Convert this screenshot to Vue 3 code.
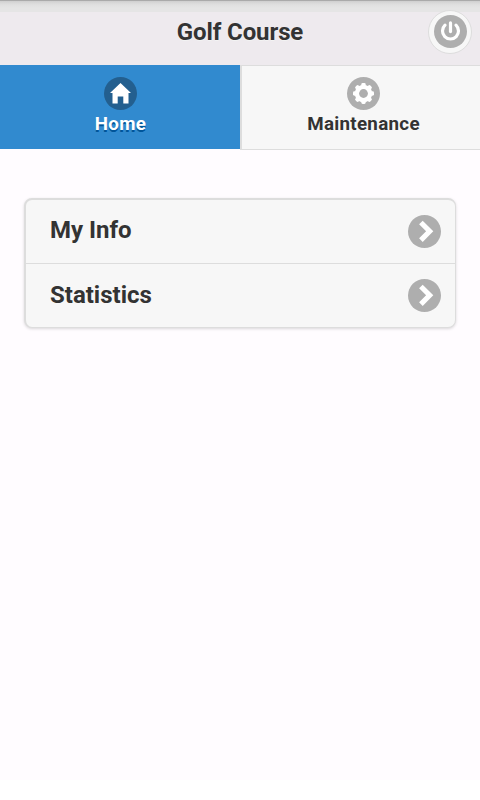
<script setup>
    import { ref } from 'vue';

    const activeTab = ref('home');

    const tabs = [
        { id: 'home', label: 'Home' },
        { id: 'maintenance', label: 'Maintenance' },
    ];

    const items = ['My Info', 'Statistics'];

    const teeth = [0, 45, 90, 135, 180, 225, 270, 315];
</script>

<template>
    <div class='page'>
        <header class='header'>
            <h1 class='title'>Golf Course</h1>
            <button class='power' aria-label='Log out'>
                <svg class='disc' viewBox='0 0 33 33'>
                    <circle cx='16.5' cy='16.5' r='16.5' />
                    <path class='line' d='M11 10.2 A8 8 0 1 0 22 10.2' />
                    <path class='line' d='M16.5 7.9 V16.6' />
                </svg>
            </button>
        </header>

        <nav class='tabs'>
            <button
                v-for='tab in tabs'
                :key='tab.id'
                class='tab'
                :class='{ active: activeTab == tab.id }'
                @click='activeTab = tab.id'
            >
                <svg class='disc' viewBox='0 0 33 33'>
                    <circle cx='16.5' cy='16.5' r='16.5' />
                    <polygon v-if='tab.id == "home"' class='glyph' points='16.5,6 6,16 8.5,16 8.5,26.6 13.7,26.6 13.7,19.5 19.3,19.5 19.3,26.6 24.5,26.6 24.5,16 27,16' />
                    <g v-else class='glyph'>
                        <circle cx='16.5' cy='16.5' r='8.7' />
                        <rect v-for='angle in teeth' :key='angle' x='14.3' y='6' width='4.4' height='5' rx='1.4' :transform='`rotate(${angle} 16.5 16.5)`' />
                        <circle class='hole' cx='16.5' cy='16.5' r='4.4' />
                    </g>
                </svg>
                <span class='label'>{{ tab.label }}</span>
            </button>
        </nav>

        <main class='content'>
            <ul class='list'>
                <li v-for='item in items' :key='item' class='item'>
                    <span class='text'>{{ item }}</span>
                    <svg class='disc' viewBox='0 0 33 33'>
                        <circle cx='16.5' cy='16.5' r='16.5' />
                        <polygon class='glyph' points='11.1,9.3 14.7,5.7 25.3,16.3 14.7,26.9 11.1,23.3 18.1,16.3' />
                    </svg>
                </li>
            </ul>
        </main>
    </div>
</template>

<style>
    body {
        background: #fff;
    }
</style>

<style scoped>
    .page {
        height: 780px;
        background: #fffcff;
        color: #333;
        font-family: Roboto, sans-serif;
        font-weight: bold;
    }

    .header {
        position: relative;
        box-sizing: border-box;
        height: 66px;
        border-bottom: 1px solid #ddd;
        background: linear-gradient(#aaa 0, #aaa 1px, #cfcfcf 1px, #d9d9d9 3px, #e0e0e0 5px, #e5e5e5 8px, #e5e5e5 12px, #eeeaee 12px);
    }

    .title {
        margin: 0;
        padding-top: 17px;
        font-size: 24px;
        line-height: 30px;
        letter-spacing: -.1px;
        text-align: center;
        text-shadow: 0 1px 0 #f3f3f3;
    }

    .power {
        position: absolute;
        top: 9.5px;
        right: 8px;
        display: flex;
        align-items: center;
        justify-content: center;
        width: 44px;
        height: 44px;
        padding: 0;
        border: 1px solid #ddd;
        border-radius: 50%;
        background: #f7f7f7;
    }

    .disc {
        display: block;
        flex: none;
        width: 33px;
        height: 33px;
        fill: #aeaeae;
    }

    .line {
        fill: none;
        stroke: #fff;
        stroke-width: 3.2;
        stroke-linecap: round;
    }

    .glyph {
        fill: #fff;
    }

    .hole {
        fill: #aeaeae;
    }

    .tabs {
        display: flex;
        height: 84px;
        margin-top: -1px;
        position: relative;
    }

    .tab {
        box-sizing: border-box;
        display: flex;
        flex-direction: column;
        align-items: center;
        width: 240px;
        height: 85px;
        padding: 11px 0 0 4px;
        border: 0 solid #ddd;
        border-width: 1px 0 1px 2px;
        background: #f7f7f7;
        color: #333;
        font: inherit;
        font-size: 18.75px;
        letter-spacing: .3px;
    }

    .tab.active {
        height: 84px;
        padding: 12px 0 0;
        border: none;
        background: #318acf;
        color: #fff;
        text-shadow: 0 2px 0 #005599;
    }

    .tab.active .disc {
        fill: #235f8f;
    }

    .tab.active .glyph {
        fill: #fff;
    }

    .label {
        margin-top: 2px;
        padding-left: 1px;
        line-height: 25px;
    }

    .content {
        padding: 49px 24px 0;
    }

    .list {
        margin: 0;
        padding: 0;
        border: 1px solid #ddd;
        border-width: 2px 1px 1px 2px;
        border-radius: 8px;
        background: #f7f7f7;
        box-shadow: 0 1px 3px rgba(0, 0, 0, .15);
        list-style: none;
    }

    .item {
        display: flex;
        align-items: center;
        justify-content: space-between;
        height: 63px;
        padding: 0 14px 0 24px;
        font-size: 24px;
        line-height: 30px;
    }

    .item + .item {
        border-top: 1px solid #ddd;
    }

    .text {
        padding-bottom: 3px;
    }

    .item + .item .text {
        padding-bottom: 1px;
    }
</style>
